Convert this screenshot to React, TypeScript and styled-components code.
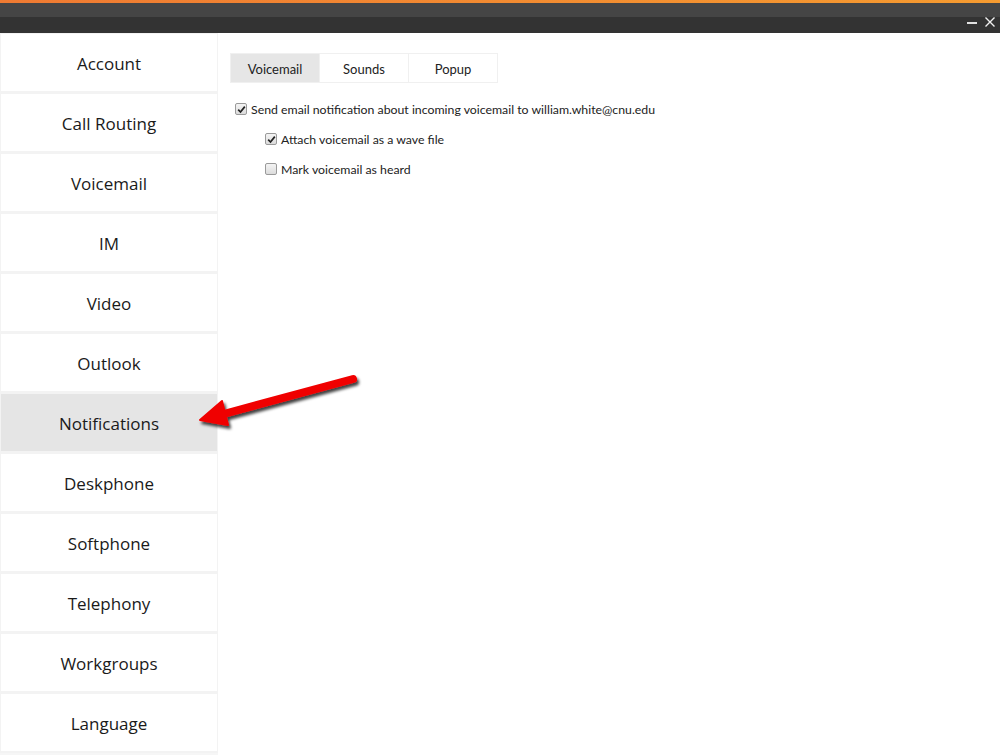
import React from "react";
import styled, { createGlobalStyle } from "styled-components";

const GlobalStyle = createGlobalStyle`
  html, body {
    margin: 0;
    padding: 0;
    background: #ffffff;
  }
  body {
    font-family: "Open Sans", "Noto Sans", sans-serif;
    color: #222;
  }
`;

const Window = styled.div`
  width: 1000px;
  height: 755px;
  display: flex;
  flex-direction: column;
  overflow: hidden;
  position: relative;
`;

const AccentBar = styled.div`
  height: 3px;
  background: linear-gradient(90deg, #ef7a32, #f59b30);
`;

const TitleBar = styled.div`
  height: 30px;
  background: linear-gradient(180deg, #454545 0, #454545 14px, #333333 14px);
  display: flex;
  justify-content: flex-end;
  align-items: flex-end;
  padding: 0 4px 5px 0;
  box-sizing: border-box;
  gap: 6px;
`;

const WinButton = styled.button`
  width: 12px;
  height: 12px;
  border: none;
  padding: 0;
  background: none;
  display: flex;
  align-items: center;
  justify-content: center;
`;

const Body = styled.div`
  flex: 1;
  display: flex;
`;

const Sidebar = styled.nav`
  width: 218px;
  display: flex;
  flex-direction: column;
  background: #f6f6f6;
`;

const NavItem = styled.div<{ $active?: boolean }>`
  height: 60px;
  box-sizing: border-box;
  border: 1px solid #f3f3f3;
  border-bottom-width: 2px;
  padding-top: 2px;
  background: ${(p) => (p.$active ? "#e5e5e5" : "#ffffff")};
  display: flex;
  align-items: center;
  justify-content: center;
  font-size: 17px;
  color: #1a1a1a;
`;

const Content = styled.main`
  flex: 1;
  padding: 20px 0 0 12px;
  font-family: "Lato", "Open Sans", sans-serif;
`;

const Tabs = styled.div`
  display: flex;
  margin-bottom: 11px;
`;

const Tab = styled.div<{ $active?: boolean }>`
  width: 90px;
  height: 30px;
  box-sizing: border-box;
  border: 1px solid #f0f0f0;
  margin-right: -1px;
  padding-top: 1px;
  background: ${(p) => (p.$active ? "#e6e6e6" : "#ffffff")};
  display: flex;
  align-items: center;
  justify-content: center;
  font-size: 13px;
  color: #222;
`;

const Option = styled.label<{ $indent?: boolean }>`
  display: flex;
  align-items: center;
  height: 30px;
  margin-left: ${(p) => (p.$indent ? "35px" : "5px")};
  font-size: 12.3px;
  color: #222;
`;

const Box = styled.span`
  width: 10px;
  height: 10px;
  border: 1px solid #9a9a9a;
  border-radius: 2px;
  background: linear-gradient(180deg, #f4f4f4, #dcdcdc);
  margin-right: 4px;
  display: flex;
  align-items: center;
  justify-content: center;
  flex-shrink: 0;
`;

const ArrowLayer = styled.svg`
  position: absolute;
  left: 190px;
  top: 365px;
  pointer-events: none;
`;

const Check = () => (
  <svg width="9" height="9" viewBox="0 0 9 9">
    <path d="M1.2 4.6 L3.5 7 L7.8 1.6" fill="none" stroke="#222" strokeWidth="1.7" />
  </svg>
);

const navItems = [
  "Account",
  "Call Routing",
  "Voicemail",
  "IM",
  "Video",
  "Outlook",
  "Notifications",
  "Deskphone",
  "Softphone",
  "Telephony",
  "Workgroups",
  "Language",
];

export default function App() {
  return (
    <Window>
      <GlobalStyle />
      <AccentBar />
      <TitleBar>
        <WinButton aria-label="minimize">
          <svg width="12" height="12" viewBox="0 0 12 12">
            <rect x="1" y="6" width="10" height="2" fill="#e0e0e0" />
          </svg>
        </WinButton>
        <WinButton aria-label="close">
          <svg width="12" height="12" viewBox="0 0 12 12">
            <path d="M1.5 1.5 L10.5 10.5 M10.5 1.5 L1.5 10.5" stroke="#f0f0f0" strokeWidth="1.4" />
          </svg>
        </WinButton>
      </TitleBar>
      <Body>
        <Sidebar>
          {navItems.map((n) => (
            <NavItem key={n} $active={n === "Notifications"}>
              {n}
            </NavItem>
          ))}
        </Sidebar>
        <Content>
          <Tabs>
            <Tab $active>Voicemail</Tab>
            <Tab>Sounds</Tab>
            <Tab>Popup</Tab>
          </Tabs>
          <Option>
            <Box>
              <Check />
            </Box>
            Send email notification about incoming voicemail to william.white@cnu.edu
          </Option>
          <Option $indent>
            <Box>
              <Check />
            </Box>
            Attach voicemail as a wave file
          </Option>
          <Option $indent>
            <Box />
            Mark voicemail as heard
          </Option>
        </Content>
        <ArrowLayer width="190" height="80" viewBox="0 0 190 80">
          <defs>
            <filter id="sh" x="-20%" y="-40%" width="140%" height="180%">
              <feDropShadow dx="2" dy="3" stdDeviation="1.6" floodColor="#000" floodOpacity="0.75" />
            </filter>
          </defs>
          <g filter="url(#sh)">
            <line x1="163" y1="14" x2="30" y2="50" stroke="#f00000" strokeWidth="8" strokeLinecap="round" />
            <path d="M10 55 L32 36 L38 60 Z" fill="#f00000" stroke="#f00000" strokeWidth="2" strokeLinejoin="round" />
          </g>
        </ArrowLayer>
      </Body>
    </Window>
  );
}
